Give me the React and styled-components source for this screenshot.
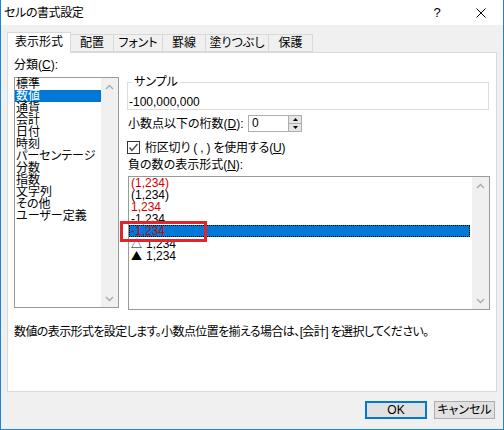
import React from "react";
import styled, { createGlobalStyle } from "styled-components";

const GlobalStyle = createGlobalStyle`
  html, body { margin: 0; padding: 0; background: #fff; }
  body {
    font-family: "Liberation Sans", "Noto Sans CJK JP", sans-serif;
    font-size: 12px;
    color: #000;
    font-feature-settings: "palt";
  }
  * { box-sizing: border-box; }
`;

const Window = styled.div`
  width: 504px;
  height: 430px;
  display: flex;
  flex-direction: column;
  background: #f0f0f0;
  border: 1px solid #1883d7;
  border-top: none;
`;

const TitleBar = styled.div`
  height: 25px;
  flex: none;
  display: flex;
  align-items: center;
  background: #fff;
  padding-left: 3px;
`;

const TitleText = styled.span`
  font-size: 12px;
  line-height: 14px;
  letter-spacing: -0.4px;
`;

const TitleButton = styled.div`
  width: 44px;
  height: 25px;
  display: flex;
  align-items: center;
  justify-content: center;
  font-size: 13px;
  margin-left: ${(p) => (p.first ? "auto" : "0")};
`;

const Body = styled.div`
  flex: 1;
  display: flex;
  flex-direction: column;
  padding: 7px 6px 0 6px;
`;

const TabRow = styled.div`
  height: 21px;
  display: flex;
  align-items: flex-end;
`;

const Tab = styled.div`
  width: ${(p) => p.w}px;
  height: ${(p) => (p.active ? 21 : 18)}px;
  margin-bottom: ${(p) => (p.active ? 0 : 1)}px;
  margin-left: ${(p) => (p.first ? 0 : -1)}px;
  display: flex;
  align-items: center;
  justify-content: center;
  padding-bottom: ${(p) => (p.active ? 2 : 0)}px;
  background: ${(p) => (p.active ? "#fff" : "#f0f0f0")};
  border: 1px solid #d9d9d9;
  border-bottom: ${(p) => (p.active ? "none" : "1px solid #d9d9d9")};
  position: relative;
  z-index: ${(p) => (p.active ? 2 : 1)};
  line-height: 14px;
`;

const Panel = styled.div`
  height: 340px;
  flex: none;
  margin-top: -1px;
  background: #fff;
  border: 1px solid #d9d9d9;
  display: flex;
  flex-direction: column;
  padding: 5px 5px 0 6px;
`;

const TopSection = styled.div`
  display: flex;
  gap: 8px;
  height: 252px;
`;

const LeftColumn = styled.div`
  width: 105px;
  display: flex;
  flex-direction: column;
`;

const RightColumn = styled.div`
  width: 363px;
  display: flex;
  flex-direction: column;
  padding-top: 17px;
`;

const FieldLabel = styled.div`
  line-height: 14px;
  height: 14px;
  white-space: nowrap;
  margin-left: ${(p) => p.ml || 0}px;
  margin-top: ${(p) => p.mt || 0}px;
  width: ${(p) => (p.w ? `${p.w}px` : "auto")};
  flex: none;
`;

const ListBox = styled.div`
  border: 1px solid #9a9a9a;
  background: #fff;
  display: flex;
  height: ${(p) => p.h}px;
  margin-top: ${(p) => p.mt}px;
  margin-left: ${(p) => p.ml || 0}px;
  width: ${(p) => p.w}px;
  position: relative;
`;

const Items = styled.div`
  flex: 1;
  display: flex;
  flex-direction: column;
  padding-right: ${(p) => p.pr || 0}px;
`;

const Item = styled.div`
  height: 12px;
  line-height: 12px;
  padding-left: ${(p) => p.pl}px;
  white-space: nowrap;
  background: ${(p) => (p.selected ? "#0078d7" : "transparent")};
  color: ${(p) => (p.selected && !p.red ? "#fff" : p.red ? "#d40000" : "#000")};
  outline: ${(p) => (p.focus ? "1px dotted #000" : "none")};
  outline-offset: -1px;
`;

const Mark = styled.span`
  font-family: "Noto Sans CJK JP", sans-serif;
  font-size: 11px;
  margin-right: 4px;
`;

const ScrollBar = styled.div`
  width: 17px;
  flex: none;
  background: #f0f0f0;
  display: flex;
  flex-direction: column;
  justify-content: space-between;
`;

const ScrollArrow = styled.div`
  height: 17px;
  display: flex;
  align-items: center;
  justify-content: center;
`;

const GroupBox = styled.fieldset`
  margin: 0;
  width: 362px;
  border: 1px solid #dcdcdc;
  padding: 6px 0 0 1px;
  min-width: 0;
`;

const Legend = styled.legend`
  padding: 0 2px;
  margin-left: 3px;
  line-height: 14px;
`;

const SampleValue = styled.div`
  line-height: 14px;
  height: 14px;
`;

const Row = styled.div`
  display: flex;
  align-items: center;
  height: ${(p) => p.h}px;
  margin-top: ${(p) => p.mt}px;
`;

const SpinBox = styled.div`
  width: 54px;
  height: 17px;
  border: 1px solid #abadb3;
  display: flex;
  background: #fff;
`;

const SpinValue = styled.div`
  flex: 1;
  padding-left: 3px;
  line-height: 15px;
`;

const SpinButtons = styled.div`
  width: 13px;
  display: flex;
  flex-direction: column;
  border-left: 1px solid #adadad;
`;

const SpinButton = styled.div`
  flex: 1;
  background: #e5e5e5;
  border-top: ${(p) => (p.down ? "1px solid #adadad" : "none")};
  display: flex;
  align-items: center;
  justify-content: center;
`;

const CheckBox = styled.div`
  width: 13px;
  height: 13px;
  border: 1px solid #333;
  background: #fff;
  display: flex;
  align-items: center;
  justify-content: center;
  flex: none;
`;

const CheckLabel = styled.span`
  margin-left: 5px;
  line-height: 14px;
  white-space: nowrap;
  letter-spacing: -0.2px;
`;

const Annotation = styled.div`
  position: absolute;
  left: -9px;
  top: 44px;
  width: 87px;
  height: 21px;
  border: 3px solid #e0262b;
  pointer-events: none;
`;

const Description = styled.div`
  margin-top: 15px;
  line-height: 14px;
  white-space: nowrap;
  letter-spacing: -0.6px;
`;

const ButtonRow = styled.div`
  display: flex;
  justify-content: flex-end;
  gap: 7px;
  margin-top: 9px;
  padding-right: 2px;
`;

const Button = styled.div`
  width: ${(p) => p.w}px;
  height: 18px;
  display: flex;
  align-items: center;
  justify-content: center;
  background: #e1e1e1;
  border: ${(p) => (p.primary ? "2px solid #0078d7" : "1px solid #adadad")};
  line-height: 14px;
`;

const Up = () => (
  <svg width="9" height="6" viewBox="0 0 9 6">
    <polyline points="1,5 4.5,1.5 8,5" fill="none" stroke="#a8a8a8" strokeWidth="1.3" />
  </svg>
);

const Down = () => (
  <svg width="9" height="6" viewBox="0 0 9 6">
    <polyline points="1,1 4.5,4.5 8,1" fill="none" stroke="#a8a8a8" strokeWidth="1.3" />
  </svg>
);

const Scroll = () => (
  <ScrollBar>
    <ScrollArrow><Up /></ScrollArrow>
    <ScrollArrow><Down /></ScrollArrow>
  </ScrollBar>
);

const tabs = [
  { label: "表示形式", w: 64 },
  { label: "配置", w: 44 },
  { label: "フォント", w: 50 },
  { label: "罫線", w: 44 },
  { label: "塗りつぶし", w: 64 },
  { label: "保護", w: 45 },
];

const categories = [
  "標準", "数値", "通貨", "会計", "日付", "時刻",
  "パーセンテージ", "分数", "指数", "文字列", "その他", "ユーザー定義",
];

const negatives = [
  { t: "(1,234)", red: true },
  { t: "(1,234)" },
  { t: "1,234", red: true },
  { t: "-1,234" },
  { t: "-1,234", red: true, sel: true },
  { mark: "△", t: "1,234" },
  { mark: "▲", t: "1,234" },
];

export default function App() {
  return (
    <>
      <GlobalStyle />
      <Window>
        <TitleBar>
          <TitleText>セルの書式設定</TitleText>
          <TitleButton first>?</TitleButton>
          <TitleButton>
            <svg width="10" height="10" viewBox="0 0 10 10">
              <path d="M0.5 0.5 L9.5 9.5 M9.5 0.5 L0.5 9.5" stroke="#000" strokeWidth="1" />
            </svg>
          </TitleButton>
        </TitleBar>
        <Body>
          <TabRow>
            {tabs.map((t, i) => (
              <Tab key={t.label} w={t.w} first={i === 0} active={i === 0}>
                {t.label}
              </Tab>
            ))}
          </TabRow>
          <Panel>
            <TopSection>
              <LeftColumn>
                <FieldLabel>分類(<u>C</u>):</FieldLabel>
                <ListBox w={105} h={231} mt={5}>
                  <Items>
                    {categories.map((c, i) => (
                      <Item key={c} pl={1} selected={i === 1}>{c}</Item>
                    ))}
                  </Items>
                  <Scroll />
                </ListBox>
              </LeftColumn>
              <RightColumn>
                <GroupBox>
                  <Legend>サンプル</Legend>
                  <SampleValue>-100,000,000</SampleValue>
                </GroupBox>
                <Row h={17} mt={5}>
                  <FieldLabel ml={1} w={120}>小数点以下の桁数(<u>D</u>):</FieldLabel>
                  <SpinBox>
                    <SpinValue>0</SpinValue>
                    <SpinButtons>
                      <SpinButton>
                        <svg width="5" height="3" viewBox="0 0 5 3"><polygon points="0,3 2.5,0 5,3" fill="#000" /></svg>
                      </SpinButton>
                      <SpinButton down>
                        <svg width="5" height="3" viewBox="0 0 5 3"><polygon points="0,0 2.5,3 5,0" fill="#000" /></svg>
                      </SpinButton>
                    </SpinButtons>
                  </SpinBox>
                </Row>
                <Row h={13} mt={9}>
                  <CheckBox>
                    <svg width="11" height="11" viewBox="0 0 11 11">
                      <polyline points="1.5,5.5 4,8.5 9.5,2" fill="none" stroke="#444" strokeWidth="1.3" />
                    </svg>
                  </CheckBox>
                  <CheckLabel>桁区切り ( , ) を使用する(<u>U</u>)</CheckLabel>
                </Row>
                <FieldLabel ml={1} mt={4}>負の数の表示形式(<u>N</u>):</FieldLabel>
                <ListBox w={362} h={134} mt={4} ml={1}>
                  <Items pr={2}>
                    {negatives.map((n, i) => (
                      <Item key={i} pl={2} red={n.red} selected={n.sel} focus={n.sel}>
                        {n.mark && <Mark>{n.mark}</Mark>}
                        {n.t}
                      </Item>
                    ))}
                  </Items>
                  <Scroll />
                  <Annotation />
                </ListBox>
              </RightColumn>
            </TopSection>
            <Description>
              数値の表示形式を設定します。小数点位置を揃える場合は、[会計] を選択してください。
            </Description>
          </Panel>
          <ButtonRow>
            <Button primary w={62}>OK</Button>
            <Button w={61}>キャンセル</Button>
          </ButtonRow>
        </Body>
      </Window>
    </>
  );
}
